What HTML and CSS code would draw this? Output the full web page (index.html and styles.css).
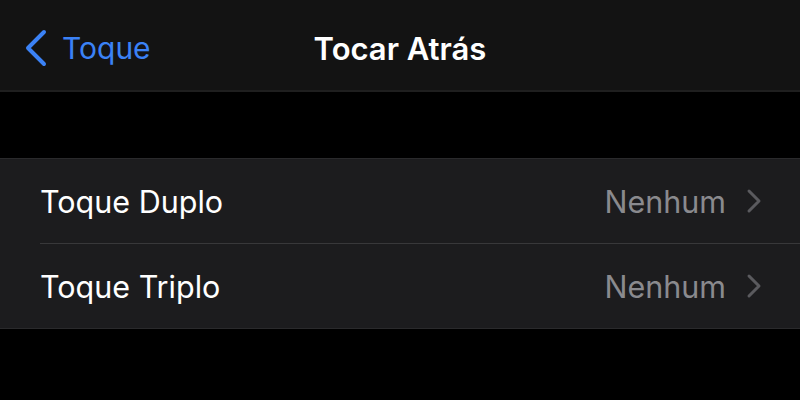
FILE: index.html
```html
<!DOCTYPE html>
<html lang="pt">
<head>
    <meta charset="UTF-8">
    <meta name="viewport" content="width=device-width, initial-scale=1.0">
    <title>Tocar Atrás</title>
    <link rel="stylesheet" href="styles.css">
</head>
<body>
    <div class="screen">
        <!-- Navbar -->
        <div class="navbar">
            <a class="back" href="#">
                <svg class="back-icon" width="24" height="38" viewBox="0 0 24 38">
                    <path d="M20 3 L4 19 L20 35" fill="none" stroke="#3b82f6" stroke-width="4" stroke-linecap="round" stroke-linejoin="round"/>
                </svg>
                <span>Toque</span>
            </a>
            <h1>Tocar Atrás</h1>
        </div>

        <!-- Settings group -->
        <div class="group">
            <div class="row">
                <span class="label">Toque Duplo</span>
                <span class="value">Nenhum</span>
                <svg class="chevron" width="16" height="26" viewBox="0 0 16 26">
                    <path d="M3 3 L13 13 L3 23" fill="none" stroke="#5a5a5e" stroke-width="3" stroke-linecap="round" stroke-linejoin="round"/>
                </svg>
            </div>
            <div class="row">
                <span class="label">Toque Triplo</span>
                <span class="value">Nenhum</span>
                <svg class="chevron" width="16" height="26" viewBox="0 0 16 26">
                    <path d="M3 3 L13 13 L3 23" fill="none" stroke="#5a5a5e" stroke-width="3" stroke-linecap="round" stroke-linejoin="round"/>
                </svg>
            </div>
        </div>
    </div>
</body>
</html>
```

FILE: styles.css
```css
body {
    margin: 0;
    padding: 0;
    font-family: 'Inter', 'Noto Sans', sans-serif;
    background-color: #000;
    color: #fff;
}

.screen {
    width: 800px;
    height: 400px;
    overflow: hidden;
}

.navbar {
    position: relative;
    height: 92px;
    padding-top: 6px;
    box-sizing: border-box;
    background-color: #131313;
    border-bottom: 2px solid #1f1f1f;
    display: flex;
    align-items: center;
    justify-content: center;
}

.navbar h1 {
    margin: 0;
    font-size: 31px;
    font-weight: 600;
}

.back {
    position: absolute;
    left: 24px;
    top: 29px;
    display: flex;
    align-items: center;
    gap: 14px;
    color: #3b82f6;
    text-decoration: none;
    font-size: 30px;
}

.back span {
    margin-top: -1px;
}

.group {
    margin-top: 66px;
    background-color: #1c1c1e;
    border-top: 1px solid #2a2a2c;
    border-bottom: 1px solid #2a2a2c;
}

.row {
    height: 84px;
    margin-left: 40px;
    padding-right: 38px;
    display: flex;
    align-items: center;
    font-size: 30.5px;
}

.row + .row {
    border-top: 1px solid #38383a;
}

.label {
    flex: 1;
}

.value {
    color: #8a8a8e;
    margin-right: 20px;
}
```
